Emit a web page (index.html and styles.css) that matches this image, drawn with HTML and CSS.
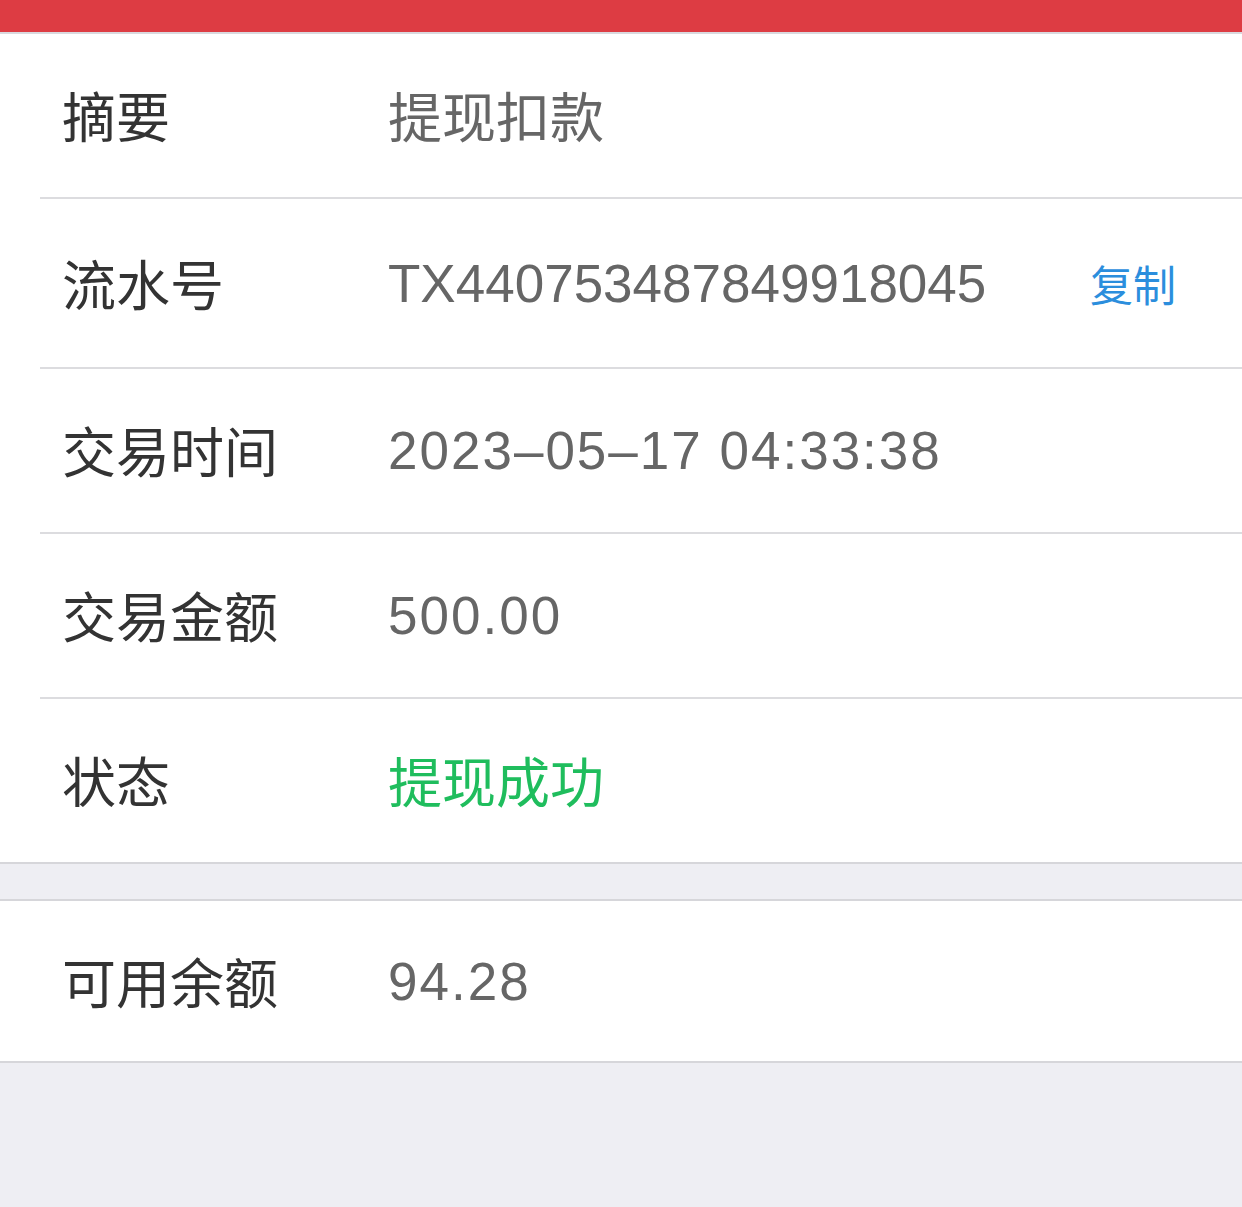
FILE: index.html
```html
<!DOCTYPE html>
<html lang="zh-CN">
<head>
<meta charset="utf-8">
<title>交易详情</title>
<link rel="stylesheet" href="styles.css">
</head>
<body>
  <header class="topbar"></header>

  <section class="group">
    <div class="row">
      <span class="label">摘要</span>
      <span class="value value-text">提现扣款</span>
    </div>
    <div class="row row-tall">
      <span class="label">流水号</span>
      <span class="value">TX440753487849918045</span>
      <a class="copy">复制</a>
    </div>
    <div class="row">
      <span class="label">交易时间</span>
      <span class="value value-date">2023–05–17 04:33:38</span>
    </div>
    <div class="row">
      <span class="label">交易金额</span>
      <span class="value value-amount">500.00</span>
    </div>
    <div class="row">
      <span class="label">状态</span>
      <span class="value value-text status-ok">提现成功</span>
    </div>
  </section>

  <section class="group">
    <div class="row row-balance">
      <span class="label">可用余额</span>
      <span class="value value-amount">94.28</span>
    </div>
  </section>
</body>
</html>
```
FILE: styles.css
```css
html, body {
  margin: 0;
  padding: 0;
}

body {
  background: #eeeef3;
  font-family: "Liberation Sans", "Noto Sans CJK SC", sans-serif;
  min-height: 1207px;
}

.topbar {
  height: 32px;
  background: #dd3c43;
  border-bottom: 2px solid #d9d9de;
}

.group {
  background: #ffffff;
  border-bottom: 2px solid #d6d6da;
}

.group + .group {
  margin-top: 35px;
  border-top: 2px solid #d6d6da;
}

.row {
  height: 163px;
  margin-left: 40px;
  padding-left: 22px;
  padding-right: 66px;
  display: flex;
  align-items: center;
  border-bottom: 2px solid #dcdcdf;
}

.row:last-child {
  border-bottom: none;
  height: 163px;
}

.row-tall {
  height: 168px;
}

.row.row-balance {
  height: 160px;
}

.label {
  width: 326px;
  flex: none;
  font-family: "Noto Sans CJK SC", sans-serif;
  font-size: 54px;
  line-height: 1;
  margin-top: -1px;
  color: #333333;
}

.value {
  flex: 1;
  font-size: 53px;
  color: #666666;
}

.value-text {
  font-family: "Noto Sans CJK SC", sans-serif;
  font-size: 54px;
  line-height: 1;
  margin-top: -1px;
}

.value-date {
  letter-spacing: 2px;
}

.value-amount {
  letter-spacing: 2px;
}

.status-ok {
  color: #1fbd5d;
}

.copy {
  font-family: "Noto Sans CJK SC", sans-serif;
  font-size: 43px;
  color: #2b8edd;
}
```
